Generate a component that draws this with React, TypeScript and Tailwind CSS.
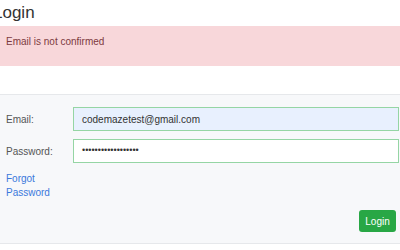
import React from "react";

export default function App() {
  return (
    <div className="w-[400px] h-[250px] overflow-hidden bg-white font-['Liberation_Sans',Arial,sans-serif]">
      <h1 className="-ml-[7px] pt-[3px] text-[17px] leading-[20px] text-[#333]">Login</h1>
      <div className="mt-[3px] h-[40px] bg-[#f8d7da] px-[6px] pt-[8px] text-[10px] leading-[15px] text-[#7d3a3f]">
        Email is not confirmed
      </div>
      <div className="mt-[28px] border-y border-[#e6e8eb] bg-[#f7f8fa] pl-[6px] pr-[1px] pt-[12px] pb-[11px]">
        <div className="flex h-[24px] items-center">
          <label className="w-[67px] text-[10px] text-[#555]">Email:</label>
          <div className="flex h-[24px] flex-1 items-center border-[1.5px] border-[#95d5a4] bg-[#e8f0fe] pl-[8px] text-[10px] text-[#333]">
            codemazetest@gmail.com
          </div>
        </div>
        <div className="mt-[8px] flex h-[24px] items-center">
          <label className="w-[67px] text-[10px] text-[#555]">Password:</label>
          <div className="flex h-[24px] flex-1 items-center border-[1.5px] border-[#95d5a4] bg-white pl-[8px] text-[9px] text-[#333]">
            ••••••••••••••••••
          </div>
        </div>
        <div className="mt-[9px] w-[55px] text-[10px] leading-[14px] text-[#3a78dc]">
          Forgot Password
        </div>
        <div className="mt-[10px] flex justify-end pr-[3px]">
          <button className="flex h-[22px] w-[37px] items-center justify-center rounded-[3px] bg-[#28a745] text-[10px] text-white">
            Login
          </button>
        </div>
      </div>
    </div>
  );
}
